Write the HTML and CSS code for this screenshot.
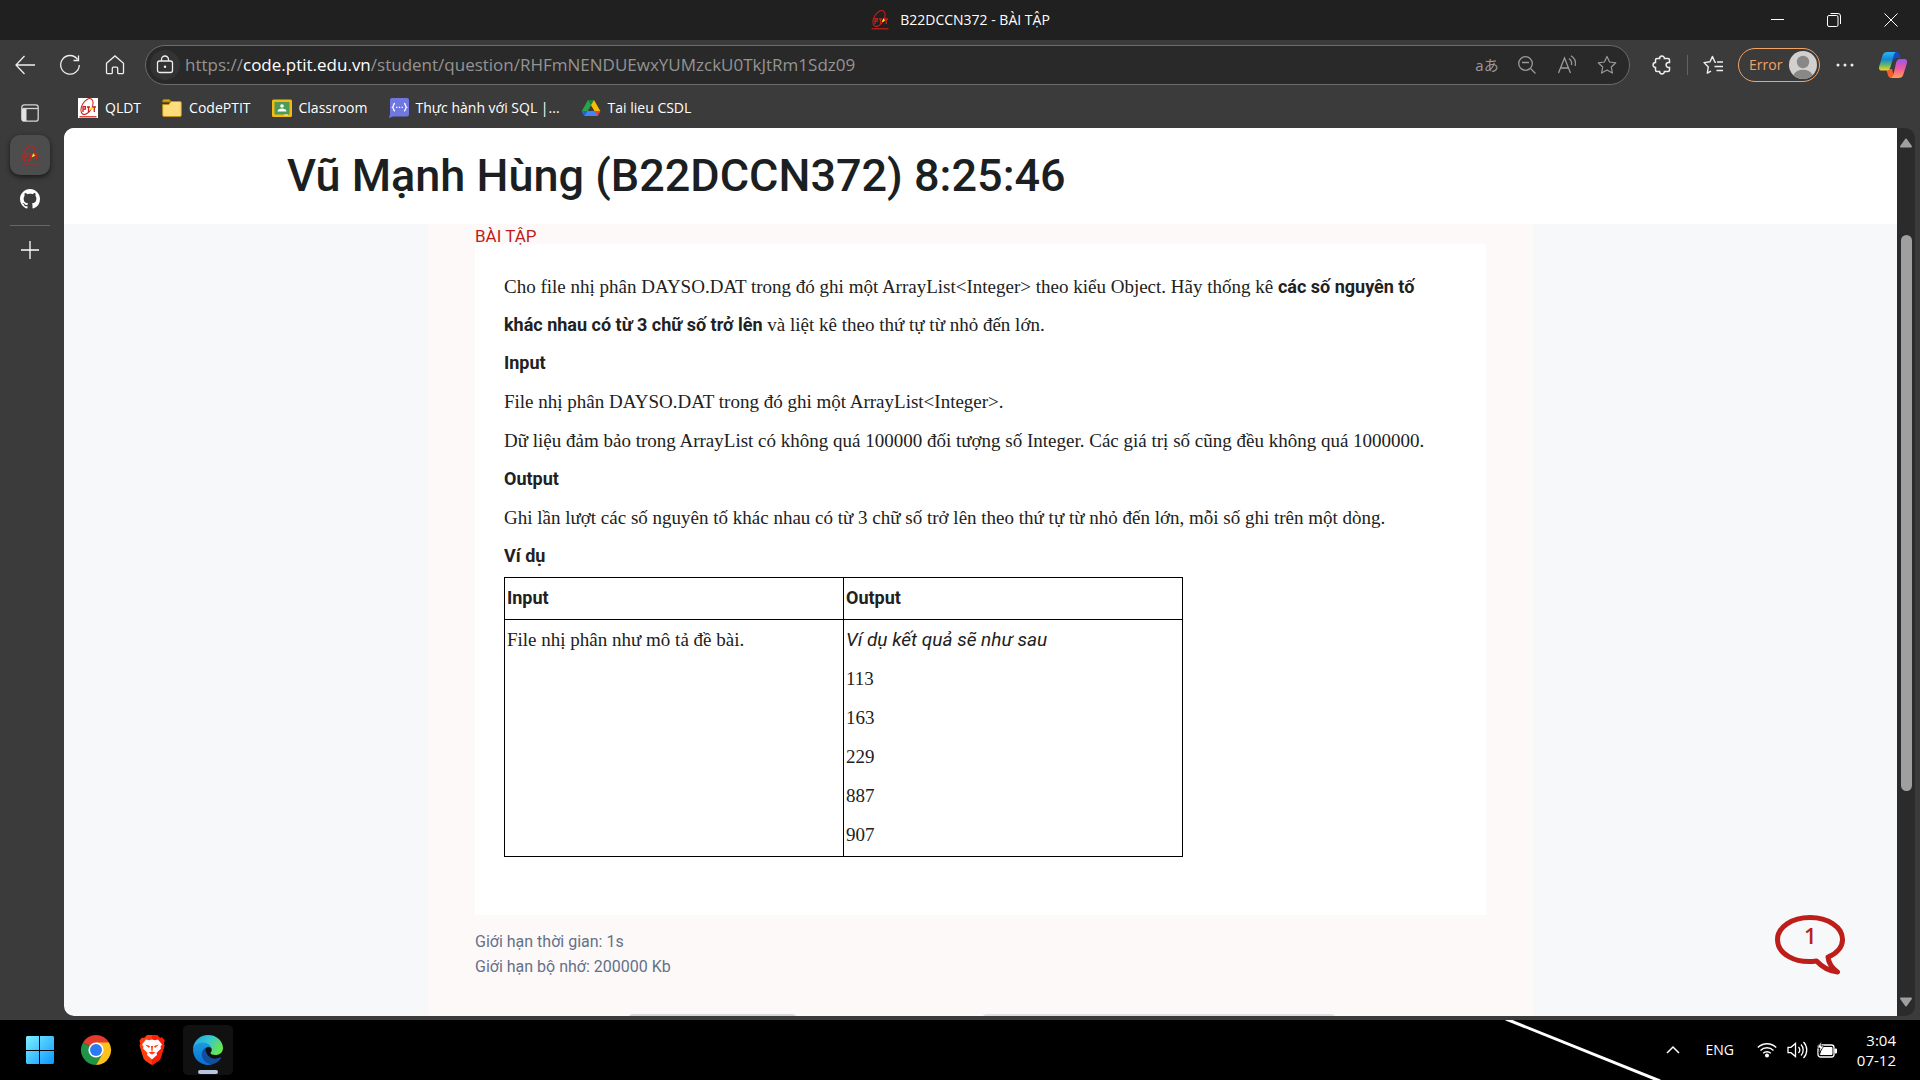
FILE: index.html
```html
<!DOCTYPE html>
<html lang="vi">
<head>
<meta charset="utf-8">
<title>B22DCCN372 - BÀI TẬP</title>
<link rel="stylesheet" href="styles.css">
</head>
<body>
<svg class="defs" aria-hidden="true">
  <defs>
    <symbol id="ptit" viewBox="0 0 20 20">
      <g fill="none" stroke="#c8201c" stroke-width="1"><ellipse cx="9" cy="8.500" rx="5" ry="8.600" transform="rotate(30 9 8.500)"/><path d="M5 8v6M5 8.700h2.400v2.500H5M9 9h3M10.500 9v5M14.500 9H18M16.300 9v5" stroke-width="1.300"/><path d="M1.500 18.800h17" stroke-width="1.200"/></g>
      <path d="M13.500 8l.8 1.700 1.200.3-2 1.700-1.900.3z" fill="#ffe500"/>
    </symbol>
    <symbol id="star" viewBox="0 0 20 20"><path d="M10 1.400l2.600 5.600 6.200.8-4.500 4.200 1.100 6.100-5.400-3-5.400 3 1.100-6.100L1.200 7.800l6.200-.8z" fill="none" stroke="currentColor" stroke-width="1.200" stroke-linejoin="round"/></symbol>
  </defs>
</svg>

<header class="titlebar">
  <div class="title"><svg class="i20"><use href="#ptit"/></svg><span>B22DCCN372 - BÀI TẬP</span></div>
  <div class="window-controls">
    <button aria-label="Minimize"><svg width="14" height="14"><path d="M1 6.500h13" stroke="#fff"/></svg></button>
    <button aria-label="Restore"><svg width="14" height="14" fill="none" stroke="#fff"><rect x=".5" y="2.500" width="10.500" height="11" rx="1.500"/><path d="M3.500.5H11a2.500 2.500 0 0 1 2.500 2.500v8"/></svg></button>
    <button aria-label="Close"><svg width="14" height="14"><path d="M.5.5l13 13M13.500.5l-13 13" stroke="#fff"/></svg></button>
  </div>
</header>

<nav class="toolbar">
  <div class="nav-buttons">
    <button aria-label="Back"><svg width="20" height="20" class="line"><path d="M9.500 1L1 10l8.500 9M1 10h19"/></svg></button>
    <button aria-label="Refresh"><svg width="20" height="20" class="line"><path d="M17.500 4.300A9.300 9.300 0 1 0 19.300 10M18.500.5v5h-5"/></svg></button>
    <button aria-label="Home"><svg width="20" height="20" class="line"><path d="M1.500 8.300L10 .9l8.500 7.400v9.200a1.200 1.200 0 0 1-1.200 1.200h-3.600a1 1 0 0 1-1-1v-4.500a1 1 0 0 0-1-1H8.300a1 1 0 0 0-1 1v4.500a1 1 0 0 1-1 1H2.700a1.200 1.200 0 0 1-1.200-1.200z"/></svg></button>
  </div>
  <div class="address">
    <button class="lock" aria-label="Site information"><svg width="18" height="20" class="line"><rect x="1.500" y="6" width="15" height="11.500" rx="2"/><path d="M5.500 6V4.500a3.500 3.500 0 0 1 7 0V6"/><circle cx="9" cy="11.700" r=".6" fill="#eee"/></svg></button>
    <div class="url" role="textbox" aria-label="Address">https://<b>code.ptit.edu.vn</b>/student/question/RHFmNENDUEwxYUMzckU0TkJtRm1Sdz09</div>
    <div class="address-tools">
      <button aria-label="Translate"><span class="translate">aあ</span></button>
      <button aria-label="Zoom out"><svg width="20" height="20" class="line"><circle cx="8.500" cy="8.500" r="6.800"/><path d="M13.500 13.500l5 5M5 7.500h7"/></svg></button>
      <button aria-label="Read aloud"><svg width="20" height="20" class="line"><path d="M1.500 18L7.500 3l6 15M3.500 13h8M12 3.500c2 1.500 3 4 2.500 6.500M14 .8c3.500 2 5 5.500 4.300 10"/></svg></button>
      <button aria-label="Favorite"><svg class="i20"><use href="#star"/></svg></button>
    </div>
  </div>
  <div class="actions">
    <button aria-label="Extensions"><svg width="20" height="20" class="line"><path d="M7.600 3.500a2.400 2.400 0 0 1 4.800 0H16a1.500 1.500 0 0 1 1.500 1.500v2.600h-1a2.400 2.400 0 0 0 0 4.800h1V15a1.500 1.500 0 0 1-1.500 1.500h-3.600a2.400 2.400 0 0 1-4.800 0H5A1.500 1.500 0 0 1 3.500 15v-2.600a2.400 2.400 0 0 1 0-4.800V5A1.500 1.500 0 0 1 5 3.500z" stroke-width="1.500"/></svg></button>
    <span class="divider"></span>
    <button aria-label="Favorites"><svg width="20" height="20" class="line"><path d="M13 7.200l-1.200-.2L9.500 1.400 7 6.800 1 7.600l4.300 4.300-1 6.300L8 16.200M14 7h6M11.500 11.500H20M13.500 15.500H20" stroke-width="1.400" stroke-linejoin="round"/></svg></button>
    <button class="profile"><span>Error</span><svg width="28" height="28"><circle cx="14" cy="14" r="14" fill="#d2d0ce"/><circle cx="14" cy="11" r="6.200" fill="#8a8886"/><path d="M4.500 24a9.700 6.500 0 0 1 19 0A14 14 0 0 1 14 28a14 14 0 0 1-9.500-4z" fill="#8a8886"/></svg></button>
    <button aria-label="More"><svg width="18" height="4" fill="#eee"><circle cx="2" cy="2" r="1.500"/><circle cx="9" cy="2" r="1.500"/><circle cx="16" cy="2" r="1.500"/></svg></button>
    <button class="copilot" aria-label="Copilot"><svg width="28" height="28" viewBox="0 0 28 28">
      <defs>
        <linearGradient id="c1" x1="0" y1="0" x2="0" y2="1"><stop offset="0" stop-color="#2bb6f5"/><stop offset=".4" stop-color="#1587d8"/><stop offset=".7" stop-color="#60b86c"/><stop offset="1" stop-color="#ffd31a"/></linearGradient>
        <linearGradient id="c2" x1="0" y1="0" x2="0" y2="1"><stop offset="0" stop-color="#9a55f0"/><stop offset=".5" stop-color="#f0589f"/><stop offset="1" stop-color="#ffa052"/></linearGradient>
      </defs>
      <path d="M14 1h4c2 0 2.500 2 3.300 6H18c-3 0-4 2-5 4z" fill="#1849c8"/>
      <path d="M7 18h6l2 7.500c.4 1-.5 1.500-1 1.500h-2c-3 0-3-4-5-9z" fill="#f2602c"/>
      <path d="M8.500 1H17c-1.500.5-2 2-3 6l-2.500 9c-.8 2.500-2 3.500-4 3.500H3c-3 0-3.500-2-2.500-5l3-10C4.300 2 6 1 8.500 1z" fill="url(#c1)"/>
      <path d="M19.500 27H12c1.500-.5 2-2 3-6l2-9c.8-2.500 2-4 4-4h4c3 0 3.500 2 2.700 5l-3.200 10c-.8 3-2.500 4-5 4z" fill="url(#c2)"/>
    </svg></button>
  </div>
</nav>

<div class="shell">
  <aside class="tabs">
    <button aria-label="Tab actions"><svg width="18" height="18"><rect x=".8" y=".8" width="16.400" height="16.400" rx="2.500" fill="none" stroke="#d5d5d5" stroke-width="1.300"/><path d="M1 4.500h4.500V17H2a1 1 0 0 1-1-1z" fill="#e2e2e2"/><path d="M2 4.500h15" stroke="#d5d5d5" stroke-width="1.300"/></svg></button>
    <button class="active" aria-label="B22DCCN372 - BÀI TẬP"><svg class="i20"><use href="#ptit"/></svg></button>
    <button aria-label="GitHub"><svg class="i20" viewBox="0 0 16 16" fill="#fff"><path d="M8 0C3.580 0 0 3.580 0 8c0 3.540 2.290 6.530 5.470 7.590.4.070.55-.17.55-.38 0-.19-.01-.82-.01-1.490-2.010.37-2.530-.49-2.690-.94-.09-.23-.48-.94-.82-1.130-.28-.15-.68-.52-.01-.53.63-.01 1.080.58 1.230.82.72 1.210 1.870.87 2.330.66.070-.52.28-.87.510-1.070-1.780-.2-3.640-.89-3.640-3.950 0-.87.310-1.590.82-2.150-.08-.2-.36-1.020.08-2.120 0 0 .67-.21 2.200.82.640-.18 1.320-.27 2-.27s1.360.09 2 .27c1.530-1.040 2.200-.82 2.200-.82.44 1.100.16 1.920.08 2.120.51.56.82 1.270.82 2.150 0 3.070-1.870 3.750-3.650 3.950.29.25.54.73.54 1.480 0 1.070-.01 1.930-.01 2.200 0 .21.15.46.55.38A8.010 8.010 0 0 0 16 8c0-4.420-3.580-8-8-8z"/></svg></button>
    <hr>
    <button aria-label="New tab"><svg width="18" height="18" class="line"><path d="M9 0v18M0 9h18"/></svg></button>
  </aside>

  <div class="content">
    <nav class="bookmarks">
      <a href="#"><svg class="i20 white"><use href="#ptit"/></svg>QLDT</a>
      <a href="#"><svg class="i20" viewBox="0 0 20 20"><path d="M.7 4V3a1.500 1.500 0 0 1 1.500-1.500h5L9.500 4z" fill="#dba612" stroke="#a87b08"/><path d="M.7 6.500h6L9 3.500h9a1.300 1.300 0 0 1 1.300 1.300v12.400a1.300 1.300 0 0 1-1.300 1.300H2a1.300 1.300 0 0 1-1.300-1.300z" fill="#ffdd7d" stroke="#c29215"/></svg>CodePTIT</a>
      <a href="#"><svg class="i20" viewBox="0 0 20 20"><rect y="1.500" width="20" height="17.500" rx="1.500" fill="#f5b90f"/><rect x="2.500" y="4" width="15" height="12.500" fill="#4b9c57"/><circle cx="10" cy="8" r="1.800" fill="#fff"/><path d="M5.500 13.500c0-4 9-4 9 0z" fill="#fff"/><path d="M12 16.500h4v1h-4z" fill="#eee"/></svg>Classroom</a>
      <a href="#"><svg class="i20" viewBox="0 0 20 20"><path d="M3 0h15a2 2 0 0 1 2 2v14a2.500 2.500 0 0 1-2.500 2.500H4L0 20l1-4V2a2 2 0 0 1 2-2z" fill="#7078e0"/><path d="M6 5.500c-2 0-1 2.800-2.500 3.700C5 10 4 13 6 13M15 5.500c2 0 1 2.800 2.500 3.700C16 10 17 13 15 13M7 9.300h1.300M9.800 9.300h1.300M12.600 9.300h1.300" fill="none" stroke="#fff" stroke-width="1.300"/></svg>Thực hành với SQL |...</a>
      <a href="#"><svg class="i20" viewBox="0 0 20 20"><path d="M7 2h6L6.500 13.500 3.500 18 .8 13z" fill="#2ba24c"/><path d="M7 2h6l-3 5.200z" fill="#188038"/><path d="M13 2l6.300 11h-5.800L10 7.200z" fill="#fbbc04"/><path d="M.8 13h18.500l-2.800 5h-13z" fill="#4285f4"/><path d="M13.500 13h5.800l-2.800 5z" fill="#ea4335"/><path d="M.8 13h5.700l-3 5z" fill="#1967d2"/></svg>Tai lieu CSDL</a>
    </nav>

    <div class="viewport">
      <main class="page">
        <header class="page-header"><h1>Vũ Mạnh Hùng (B22DCCN372) 8:25:46</h1></header>
        <section class="exercise">
          <h2>BÀI TẬP</h2>
          <article class="statement">
            <p class="lead">Cho file nhị phân DAYSO.DAT trong đó ghi một ArrayList&lt;Integer&gt; theo kiểu Object. Hãy thống kê <strong>các số nguyên tố<br>khác nhau có từ 3 chữ số trở lên</strong> và liệt kê theo thứ tự từ nhỏ đến lớn.</p>
            <h3>Input</h3>
            <p>File nhị phân DAYSO.DAT trong đó ghi một ArrayList&lt;Integer&gt;.</p>
            <p>Dữ liệu đảm bảo trong ArrayList có không quá 100000 đối tượng số Integer. Các giá trị số cũng đều không quá 1000000.</p>
            <h3>Output</h3>
            <p>Ghi lần lượt các số nguyên tố khác nhau có từ 3 chữ số trở lên theo thứ tự từ nhỏ đến lớn, mỗi số ghi trên một dòng.</p>
            <h3>Ví dụ</h3>
            <table>
              <tr><th>Input</th><th>Output</th></tr>
              <tr><td>File nhị phân như mô tả đề bài.</td><td><p><em>Ví dụ kết quả sẽ như sau</em></p><p>113</p><p>163</p><p>229</p><p>887</p><p>907</p></td></tr>
            </table>
          </article>
          <div class="limits"><p>Giới hạn thời gian: 1s</p><p>Giới hạn bộ nhớ: 200000 Kb</p></div>
          <div class="submit-row"><div class="field short"></div><div class="field"></div></div>
        </section>
        <button class="chat" aria-label="Chat">
          <svg width="70" height="60"><path d="M35 2.500c18 0 32.500 9.500 32.500 22 0 7.500-5.500 14-14.500 17.500.5 6 4 11 9.500 15-9-1-15-4.500-21-11-22 3-39-7.500-39-21.500 0-12.500 14.500-22 32.500-22z" fill="none" stroke="#be1e1a" stroke-width="5" stroke-linejoin="round"/></svg>
          <span>1</span>
        </button>
      </main>
      <div class="scrollbar">
        <svg width="12" height="10"><path d="M6 1.500l5 7H1z" fill="#9f9f9f" stroke="#9f9f9f" stroke-width="2" stroke-linejoin="round"/></svg>
        <div class="track"><div class="thumb"></div></div>
        <svg width="12" height="10"><path d="M6 8.500l5-7H1z" fill="#9f9f9f" stroke="#9f9f9f" stroke-width="2" stroke-linejoin="round"/></svg>
      </div>
    </div>
  </div>
</div>

<footer class="taskbar">
  <svg class="streak" width="150" height="60"><path d="M-2-1L152 61" stroke="#fff" stroke-width="3"/></svg>
  <div class="apps">
    <button aria-label="Start"><svg width="30" height="30"><defs><linearGradient id="w" x1="0" y1="0" x2="1" y2="1"><stop stop-color="#7cf0ff"/><stop offset="1" stop-color="#0a97ff"/></linearGradient></defs><path d="M2 1h12v14H1V2zM15 1h13l1 1v13H15zM1 16h13v13H2l-1-1zM15 16h14v12l-1 1H15z" fill="url(#w)"/></svg></button>
    <button aria-label="Chrome"><svg width="30" height="30" viewBox="0 0 30 30"><path d="M15 15L2 7.500A15 15 0 0 1 28 7.500z" fill="#e33b2e"/><path d="M15 15L2 7.500A15 15 0 0 0 15 30l6.500-11z" fill="#1f9447"/><path d="M15 7.500h13A15 15 0 0 1 15 30l6.500-11.300z" fill="#fcc21b"/><circle cx="15" cy="15" r="7.600" fill="#fff"/><circle cx="15" cy="15" r="6" fill="#2a7bf0"/></svg></button>
    <button aria-label="Brave"><svg width="26" height="30" viewBox="0 0 26 30"><path d="M8 0h10l3 3 2-.5 2.500 3-.8 3 .8 2-4 13c-1 2-5 4.500-8.500 6.500C9.500 28 5.500 25.500 4.500 23.500l-4-13 .8-2-.8-3 2.500-3L5 3z" fill="#ff3d10"/><path d="M13 0h5l3 3 2-.5 2.500 3-.8 3 .8 2-4 13c-1 2-5 4.500-8.500 6.500z" fill="#fb1e08"/><path d="M7 4.500l3 .8 3-.8 3 .8 3-.8 4 5-1.500 2 .5 2-4.500 4.500.5 2-4.500 4-.5.300-.5-.3-4.500-4 .5-2L4 13.500l.5-2-1.500-2z" fill="#fff"/><path d="M6 9.500l5 1.500-1 2zM20 9.500L15 11l1 2zM12 11h2l-.5 5h-1zM9.500 17.500l3.500-1 3.500 1-3.500 2z" fill="#fb3a12"/></svg></button>
    <button class="running" aria-label="Edge"><svg width="30" height="30" viewBox="0 0 30 30"><defs><linearGradient id="e1" x1="0" y1="0" x2="1" y2=".5"><stop stop-color="#1d9fe0"/><stop offset=".5" stop-color="#35c5d5"/><stop offset="1" stop-color="#66e650"/></linearGradient><linearGradient id="e2" x1="0" y1="0" x2="0" y2="1"><stop stop-color="#1a9be0"/><stop offset="1" stop-color="#0a6fd4"/></linearGradient></defs><path d="M0 14C.5 6 7 0 15 0c9 0 15 6.500 15 13 0 4.500-3.500 7-7.500 7-3 0-5-1-5-2s1-1.500 1-3.500c0-3-3.500-5.500-8-5.500C5 9 1.500 11 0 14z" fill="url(#e1)"/><path d="M0 15c0-4.500 5-7.500 10-7.500 6 0 8.500 4 8.500 7-4-3-8.500 0-8.500 5 0 5 4 8.500 9.500 9.800A15 15 0 0 1 0 15z" fill="url(#e2)"/><path d="M13 12.500c-4 2-5.500 7-3 11.500 2 3.500 6 5.500 9.500 5.200 4-1.200 6.500-3 8.500-6 .4-.8-.2-1-.8-.7C19 26 12 21 13 12.500z" fill="#114f9e"/><circle cx="15.500" cy="15" r="3" fill="#111"/></svg></button>
  </div>
  <div class="tray">
    <button aria-label="Hidden icons"><svg width="14" height="8"><path d="M1 7l6-6 6 6" fill="none" stroke="#fff" stroke-width="1.500"/></svg></button>
    <span class="lang">ENG</span>
    <div class="status">
      <svg width="20" height="16" fill="none" stroke="#fff" stroke-width="1.400"><path d="M.8 5.500a13 13 0 0 1 18.400 0M3.500 8.500a9.200 9.200 0 0 1 13 0M6.200 11.300a5.400 5.400 0 0 1 7.600 0"/><circle cx="10" cy="13.500" r="1.300" fill="#fff"/></svg>
      <svg width="20" height="18" fill="none" stroke="#fff" stroke-width="1.300"><path d="M1 6.300h3L8.500 2.500v13L4 11.700H1zM11.500 6a4.500 4.500 0 0 1 0 6M14 3.500a8 8 0 0 1 0 11M16.500 1a11.500 11.500 0 0 1 0 16"/></svg>
      <svg width="20" height="18"><rect x="1" y="4" width="16" height="12" rx="2.500" fill="none" stroke="#fff" stroke-width="1.300"/><path d="M6 6.500h9v7H3.500zM18 8h1.500v4H18z" fill="#fff" stroke="#fff"/><path d="M4.500 0L0 7h3l-1 5 5-7H4z" fill="#fff" stroke="#000" stroke-width=".7"/></svg>
    </div>
    <div class="clock"><time>3:04</time><time>07-12</time></div>
  </div>
</footer>
</body>
</html>
```
FILE: styles.css
```css
* { box-sizing: border-box; }

body {
  margin: 0;
  height: 100vh;
  display: flex;
  flex-direction: column;
  overflow: hidden;
  background: #3b3b3b;
  color: #fff;
  font: 14px/20px "Open Sans", "Noto Sans", "Noto Sans CJK JP", sans-serif;
}

p, h1, h2, h3 { margin: 0; }
svg { display: block; flex: none; overflow: visible; }
.defs { position: absolute; width: 0; height: 0; }
.i20 { width: 20px; height: 20px; }
.white { background: #fff; }
.line { fill: none; stroke: currentColor; stroke-width: 1.3; }

button {
  display: flex;
  align-items: center;
  justify-content: center;
  padding: 0;
  border: 0;
  background: none;
  color: inherit;
  font: inherit;
}

.titlebar {
  display: grid;
  grid-template-columns: 1fr auto 1fr;
  flex: none;
  height: 40px;
  background: #202020;
}
.title { grid-column: 2; display: flex; align-items: center; gap: 10px; }
.window-controls { display: flex; justify-content: flex-end; padding-right: 1px; }
.window-controls button { width: 57px; }

.toolbar { display: flex; align-items: center; flex: none; height: 48px; padding-top: 2px; color: #eee; }
.nav-buttons { display: flex; padding-left: 2px; }
.nav-buttons button { width: 45px; height: 40px; }
.address {
  flex: 1;
  display: flex;
  align-items: center;
  height: 40px;
  margin-left: 8px;
  padding: 0 2px 0 4px;
  border: 1px solid #6b6b6b;
  border-radius: 20px;
  background: #292929;
}
.lock { width: 30px; height: 30px; border-radius: 50%; background: #333; }
.url { flex: 1; padding-left: 5px; color: #949494; font-size: 17px; white-space: nowrap; }
.url b { color: #fff; font-weight: 400; }
.address-tools { display: flex; color: #9a9a9a; }
.address-tools button { width: 40px; height: 32px; }
.translate { font-size: 15px; }
.actions { display: flex; align-items: center; padding: 0 7px 0 12px; }
.actions button { width: 40px; height: 34px; }
.divider { width: 1px; height: 20px; margin: 0 5px; background: #626262; }
.actions .profile {
  width: 82px;
  margin: 0 5px;
  padding: 0 2px 0 10px;
  justify-content: space-between;
  border: 1px solid #f2a366;
  border-radius: 17px;
  color: #f2a366;
}
.actions .copilot { margin-left: 8px; }

.shell { flex: 1; min-height: 0; display: flex; padding-bottom: 4px; }
.tabs { display: flex; flex-direction: column; flex: none; width: 64px; padding: 7px 0 0 10px; gap: 4px; }
.tabs button { width: 40px; height: 36px; }
.tabs .active { height: 40px; border-radius: 10px; background: #4d4d4d; box-shadow: 0 2px 5px #0009; }
.tabs button:nth-of-type(3) { height: 40px; }
.tabs hr { width: 40px; height: 1px; margin: 2px 0; border: 0; background: #666; }

.content { flex: 1; min-width: 0; display: flex; flex-direction: column; padding-right: 5px; }
.bookmarks { display: flex; align-items: center; flex: none; height: 40px; padding-left: 14px; gap: 21px; }
.bookmarks a { display: flex; align-items: center; gap: 7px; color: #fff; text-decoration: none; }

.viewport { flex: 1; min-height: 0; display: flex; overflow: hidden; border-radius: 10px; background: #2b2b2b; }
.page {
  position: relative;
  flex: 1;
  overflow: hidden;
  background: #f6f8fa;
  color: #212121;
  font-family: Roboto, sans-serif;
}
.page-header { height: 96px; padding: 18px 223px 0; background: #fff; }
h1 { font-size: 45px; line-height: 60px; font-weight: 500; color: #1b1f22; }

.exercise { max-width: 1105px; margin: 0 auto; padding: 0 47px; background: #fdf9f8; }
h2 { padding-top: 4px; font-size: 17px; line-height: 16px; font-weight: 400; color: #be1e1a; }
.statement {
  min-height: 671px;
  padding: 24px 29px 0;
  background: #fff;
  font: 19px/39px "Liberation Serif", serif;
}
.lead { line-height: 38px; white-space: nowrap; }
.statement strong, th, h3 { font-family: Roboto, sans-serif; font-size: 18px; font-weight: 700; }
h3 { line-height: 38px; }
em { font-family: Roboto, sans-serif; }
table { width: 679px; margin-top: 2px; table-layout: fixed; border-collapse: collapse; }
th, td { padding: 0 2px 2px; border: 1px solid #000; text-align: left; vertical-align: top; }
.limits { padding: 14px 0 35px; font-size: 16px; line-height: 25px; color: #64708a; }
.submit-row { display: flex; gap: 185px; padding-left: 153px; }
.field { width: 354px; height: 40px; border-radius: 5px; background: #dfe0e4; }
.short { width: 169px; background: #d5d9db; }

.chat { position: absolute; right: 52px; bottom: 41px; width: 70px; height: 60px; color: #be1e1a; }
.chat span { position: absolute; top: 8px; left: 29px; font: 600 22px/24px "Open Sans", sans-serif; }

.scrollbar { display: flex; flex-direction: column; align-items: center; width: 18px; padding: 10px 0 9px; }
.track { flex: 1; width: 11px; padding-top: 87px; }
.thumb { height: 73%; border-radius: 6px; background: #9f9f9f; }

.taskbar { position: relative; display: flex; justify-content: space-between; align-items: center; flex: none; height: 60px; padding: 0 24px 0 15px; background: #000; overflow: hidden; }
.streak { position: absolute; top: 0; right: 262px; }
.apps { display: flex; gap: 6px; }
.apps button { position: relative; width: 50px; height: 50px; border-radius: 5px; }
.apps .running { background: #111; }
.running::after { content: ""; position: absolute; bottom: 1px; left: 15px; width: 20px; height: 4px; border-radius: 2px; background: #b8c4de; }
.tray { display: flex; align-items: center; }
.lang { padding: 0 23px 0 26px; }
.status { display: flex; align-items: center; gap: 10px; }
.clock { display: flex; flex-direction: column; width: 59px; font-size: 15px; text-align: right; }
```
